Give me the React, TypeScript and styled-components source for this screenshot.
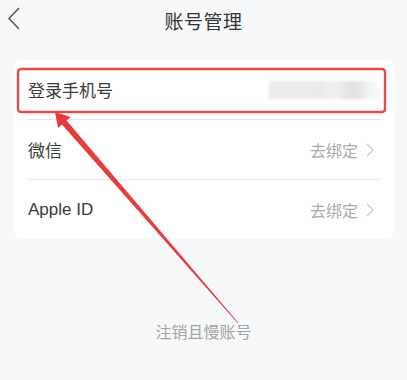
import React from "react";
import styled, { createGlobalStyle } from "styled-components";

const Global = createGlobalStyle`
  html, body { margin: 0; padding: 0; background: #f7f8fa; }
  body { font-family: "Noto Sans CJK SC", "Noto Sans", sans-serif; }
`;

const Page = styled.div`
  position: relative;
  width: 407px;
  height: 380px;
  overflow: hidden;
  background: #f7f8fa;
  display: flex;
  flex-direction: column;
`;

const Header = styled.div`
  position: relative;
  height: 40px;
  display: flex;
  align-items: center;
  justify-content: center;
`;

const BackBtn = styled.div`
  position: absolute;
  left: 6px;
  top: 6px;
  width: 16px;
  height: 26px;
`;

const Title = styled.div`
  font-size: 19px;
  font-weight: 400;
  color: #333;
  letter-spacing: 0.5px;
`;

const Card = styled.div`
  margin: 20px 13px 0 14px;
  background: #fff;
  border-radius: 8px;
  display: flex;
  flex-direction: column;
`;

const Row = styled.div<{ $divider?: boolean }>`
  height: 59px;
  margin: 0 14px 0 13px;
  padding-left: 1px;
  display: flex;
  align-items: center;
  justify-content: space-between;
  border-bottom: ${(p) => (p.$divider ? "1px solid #e6e6e6" : "none")};
`;

const Label = styled.div<{ $latin?: boolean }>`
  font-size: 17px;
  color: #3a3a3a;
  font-family: ${(p) =>
    p.$latin ? '"Liberation Sans", Arial, sans-serif' : '"Noto Sans CJK SC", sans-serif'};
`;

const Right = styled.div`
  display: flex;
  align-items: center;
  gap: 7px;
  font-size: 16px;
  color: #aaa;
  padding-right: 5px;
`;

const Blurred = styled.div`
  width: 112px;
  height: 18px;
  margin-right: -1px;
  background: linear-gradient(
    90deg,
    #ececec 0%,
    #eaeaea 45%,
    #f0f0f0 60%,
    #e2e2e2 72%,
    #e2e2e2 78%,
    #f4f4f4 90%,
    #fafafa 100%
  );
  filter: blur(1.5px);
`;

const Footer = styled.div`
  margin-top: 81px;
  text-align: center;
  font-size: 16px;
  color: #a3a3a3;
  line-height: 22px;
`;

const Overlay = styled.svg`
  position: absolute;
  left: 0;
  top: 0;
  width: 407px;
  height: 380px;
  pointer-events: none;
`;

const Chevron = () => (
  <svg width="10" height="16" viewBox="0 0 10 16">
    <polyline points="2,2 8,8 2,14" fill="none" stroke="#c8c8c8" strokeWidth="1.3" />
  </svg>
);

export default function App() {
  return (
    <Page>
      <Global />
      <Header>
        <BackBtn>
          <svg width="16" height="26" viewBox="0 0 16 26">
            <polyline points="13,2 3,12.5 13,23" fill="none" stroke="#555" strokeWidth="1.5" />
          </svg>
        </BackBtn>
        <Title>账号管理</Title>
      </Header>
      <Card>
        <Row $divider>
          <Label>登录手机号</Label>
          <Blurred />
        </Row>
        <Row $divider>
          <Label>微信</Label>
          <Right>
            去绑定
            <Chevron />
          </Right>
        </Row>
        <Row>
          <Label $latin>Apple ID</Label>
          <Right>
            去绑定
            <Chevron />
          </Right>
        </Row>
      </Card>
      <Footer>注销且慢账号</Footer>
      <Overlay viewBox="0 0 407 380">
        <rect x="18" y="69" width="367" height="43" rx="3" fill="none" stroke="#e84a4a" strokeWidth="2.4" />
        <polygon
          points="55,112 70.5,117 66.5,120.5 238.3,322.7 237.7,323.3 61.9,124.5 58,128"
          fill="#e63c3c"
        />
      </Overlay>
    </Page>
  );
}
